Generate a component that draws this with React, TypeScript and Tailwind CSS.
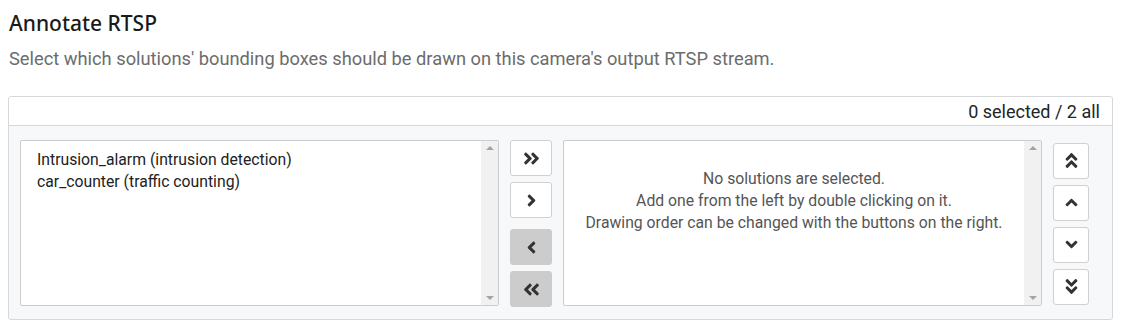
import {
  FaAngleDoubleRight,
  FaAngleRight,
  FaAngleLeft,
  FaAngleDoubleLeft,
  FaAngleDoubleUp,
  FaAngleUp,
  FaAngleDown,
  FaAngleDoubleDown,
} from "react-icons/fa";
import type { ReactNode } from "react";

const solutions = [
  "Intrusion_alarm (intrusion detection)",
  "car_counter (traffic counting)",
];

function FakeScrollbar() {
  return (
    <div className="w-[17px] shrink-0 bg-[#f1f1f1] flex flex-col justify-between items-center py-[5px]">
      <div className="w-0 h-0 border-x-[4px] border-x-transparent border-b-[4px] border-b-[#a3a3a3]" />
      <div className="w-0 h-0 border-x-[4px] border-x-transparent border-t-[4px] border-t-[#a3a3a3]" />
    </div>
  );
}

function MoveButton({ children, disabled, className = "" }: { children: ReactNode; disabled?: boolean; className?: string }) {
  return (
    <button
      className={
        "flex items-center justify-center rounded-[3px] text-[#333] text-[19px] " +
        (disabled ? "bg-[#cccccc] border border-[#cccccc] " : "bg-white border border-[#d0d0d0] ") +
        className
      }
    >
      {children}
    </button>
  );
}

export default function App() {
  return (
    <div className="w-[1121px] h-[327px] bg-white font-['Roboto',sans-serif] text-[#212529] px-[8px] pt-[10px]">
      {/* Section heading */}
      <h2 className="text-[21px] font-medium leading-[26px] font-['Noto_Sans',sans-serif] text-[#1a1a1a] pl-[1px]">
        Annotate RTSP
      </h2>
      <p className="mt-[10px] text-[18.3px] leading-[26px] text-[#6c6c6c] pl-[1px]">
        Select which solutions' bounding boxes should be drawn on this camera's output RTSP stream.
      </p>

      {/* Dual list box */}
      <div className="mt-[24px] w-[1105px] border border-[#d6d8db] rounded-[3px] bg-[#f7f8f9]">
        <div className="h-[29px] bg-white border-b border-[#d6d8db] flex items-center justify-end pr-[12px] text-[18px] text-[#212529] rounded-t-[3px]">
          0 selected / 2 all
        </div>
        <div className="flex px-[11px] pt-[14px] pb-[12px]">
          {/* Available */}
          <div className="w-[479px] h-[166px] bg-white border border-[#ccc] rounded-[2px] flex">
            <div className="flex-1 pl-[16px] pt-[8px] text-[15.75px] leading-[22px] text-[#222]">
              {solutions.map((s) => (
                <div key={s}>{s}</div>
              ))}
            </div>
            <FakeScrollbar />
          </div>

          {/* Move buttons */}
          <div className="w-[64px] flex flex-col items-center">
            <MoveButton className="w-[42px] h-[36px]">
              <FaAngleDoubleRight />
            </MoveButton>
            <MoveButton className="w-[42px] h-[36px] mt-[6px]">
              <FaAngleRight />
            </MoveButton>
            <MoveButton disabled className="w-[42px] h-[36px] mt-[11px]">
              <FaAngleLeft />
            </MoveButton>
            <MoveButton disabled className="w-[42px] h-[36px] mt-[6px]">
              <FaAngleDoubleLeft />
            </MoveButton>
          </div>

          {/* Selected */}
          <div className="w-[479px] h-[166px] bg-white border border-[#ccc] rounded-[2px] flex">
            <div className="flex-1 pt-[27px] text-center text-[15.75px] leading-[22px] text-[#555]">
              <div>No solutions are selected.</div>
              <div>Add one from the left by double clicking on it.</div>
              <div>Drawing order can be changed with the buttons on the right.</div>
            </div>
            <FakeScrollbar />
          </div>

          {/* Order buttons */}
          <div className="w-[59px] flex flex-col items-end justify-center gap-[6px] pr-[12px]">
            <MoveButton className="w-[36px] h-[36px]">
              <FaAngleDoubleUp />
            </MoveButton>
            <MoveButton className="w-[36px] h-[36px]">
              <FaAngleUp />
            </MoveButton>
            <MoveButton className="w-[36px] h-[36px]">
              <FaAngleDown />
            </MoveButton>
            <MoveButton className="w-[36px] h-[36px]">
              <FaAngleDoubleDown />
            </MoveButton>
          </div>
        </div>
      </div>
    </div>
  );
}
